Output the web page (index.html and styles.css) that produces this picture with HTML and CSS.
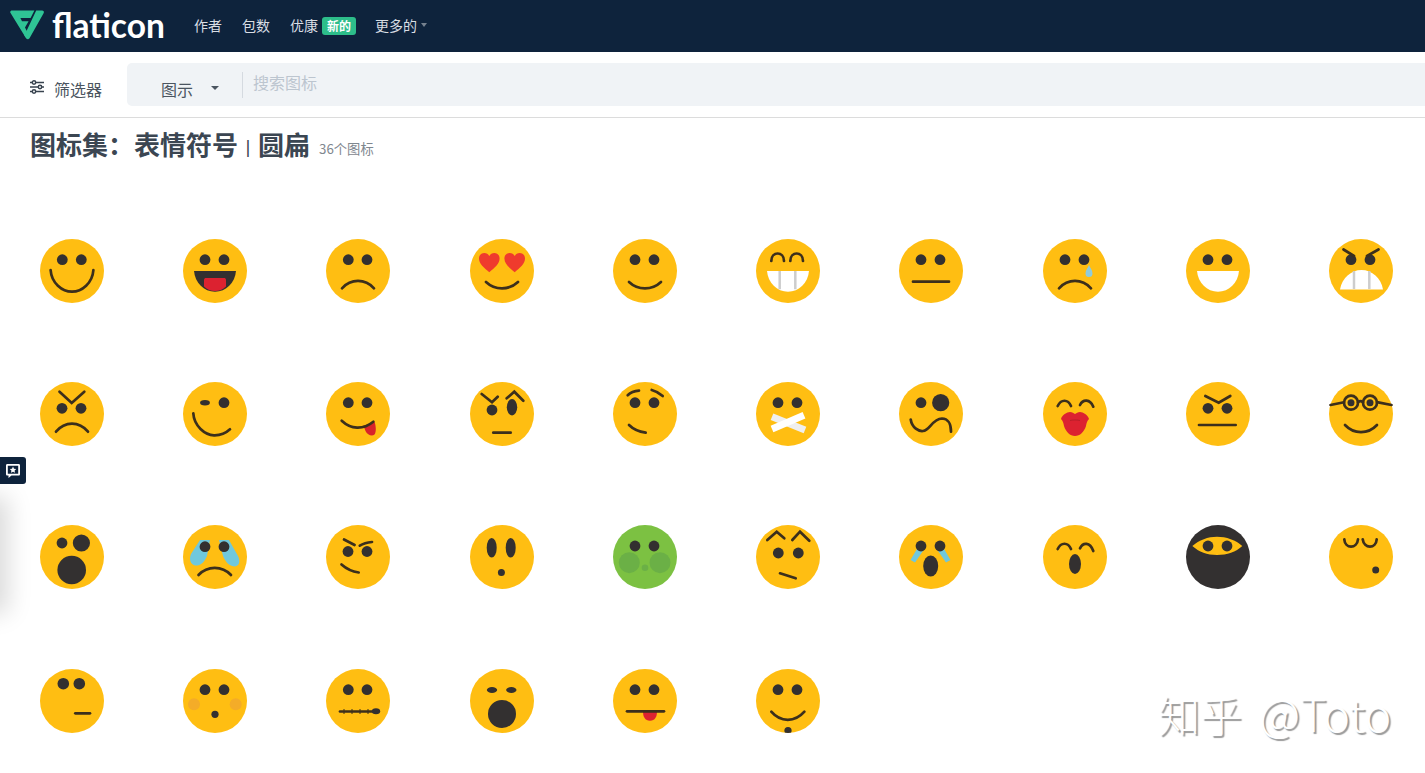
FILE: index.html
```html
<!DOCTYPE html>
<html lang="zh">
<head>
<meta charset="utf-8">
<title>flaticon</title>
<link rel="stylesheet" href="styles.css">
</head>
<body>
<header class="topbar">
  <a class="brand">
    <svg class="brand-mark" viewBox="0 0 34 30"><path d="M.4 2.8C-.2 1.4.8.4 2 .4H24.4L20.6 8H10.4L12 11.2H18.6L15 17.6 17.6 22.4 15.6 27.4Z"/><path d="M26.2.4H32.2C33.6.4 34.4 1.8 33.6 3.2L19.8 27.8C18.7 29.8 16.6 29.8 15.6 27.6L14.4 25.4Z"/></svg>
    <span class="brand-name">flaticon</span>
  </a>
  <nav class="nav">
    <a class="nav-item">作者</a>
    <a class="nav-item">包数</a>
    <a class="nav-item">优康<span class="badge">新的</span></a>
    <a class="nav-item nav-more">更多的<i class="nav-caret"></i></a>
  </nav>
</header>
<section class="toolbar">
  <div class="filter">
    <svg class="filter-icon" viewBox="0 0 14 14"><path d="M0 2.5H14M0 7H14M0 11.5H14"/><circle cx="4" cy="2.5" r="1.7"/><circle cx="10" cy="7" r="1.7"/><circle cx="4" cy="11.5" r="1.7"/></svg>
    <span>筛选器</span>
  </div>
  <div class="search">
    <div class="search-type">图示<i class="type-caret"></i></div>
    <div class="search-input">搜索图标</div>
  </div>
</section>
<h1 class="title">图标集：表情符号<span class="sep">|</span>圆扁<small class="count">36个图标</small></h1>
<main class="grid">
<!-- row 1 -->
<svg class="emo" viewBox="0 0 64 64"><circle class="face" cx="32" cy="32" r="32"/><circle class="eye" cx="22.3" cy="20.7" r="5.4"/><circle class="eye" cx="41.3" cy="20.7" r="5.4"/><path class="ln" d="M10.6 31C11.5 44 22 52.7 32 52.7S52.5 44 53.4 31"/></svg>
<svg class="emo" viewBox="0 0 64 64"><circle class="face" cx="32" cy="32" r="32"/><circle class="eye" cx="22" cy="20.7" r="5.4"/><circle class="eye" cx="41" cy="20.7" r="5.4"/><path class="eye" d="M11 32H53C52 44 43 52.7 32 52.7S12 44 11 32Z"/><path class="red" d="M21 41C21 39.5 22 39 23 39H41C42 39 43 39.5 43 41V47.5C40 50.8 36 52 32 52S24 50.8 21 47.5Z"/></svg>
<svg class="emo" viewBox="0 0 64 64"><circle class="face" cx="32" cy="32" r="32"/><circle class="eye" cx="22.3" cy="20.7" r="5.4"/><circle class="eye" cx="41" cy="20.7" r="5.4"/><path class="ln" d="M16 49.3C25 39.5 39 39.5 48 49.3"/></svg>
<svg class="emo" viewBox="0 0 64 64"><circle class="face" cx="32" cy="32" r="32"/><path class="heart" d="M19.3 33.3C14 28.5 9 25 9 19.5 9 16 11.5 14 14.3 14 16.5 14 18.3 15.2 19.3 17 20.3 15.2 22.1 14 24.3 14 27.1 14 29.6 16 29.6 19.5 29.6 25 24.6 28.5 19.3 33.3Z"/><path class="heart" d="M44.7 33.3C39.4 28.5 34.4 25 34.4 19.5 34.4 16 36.9 14 39.7 14 41.9 14 43.7 15.2 44.7 17 45.7 15.2 47.5 14 49.7 14 52.5 14 55 16 55 19.5 55 25 50 28.5 44.7 33.3Z"/><path class="ln" d="M16 43C25 51.5 39 51.5 48 43"/></svg>
<svg class="emo" viewBox="0 0 64 64"><circle class="face" cx="32" cy="32" r="32"/><circle class="eye" cx="22" cy="20.7" r="5.4"/><circle class="eye" cx="41" cy="20.7" r="5.4"/><path class="ln" d="M16 43C25 51.5 39 51.5 48 43"/></svg>
<svg class="emo" viewBox="0 0 64 64"><circle class="face" cx="32" cy="32" r="32"/><path class="ln" d="M15.3 22C15.3 12 28 12 28 22M34.3 22C34.3 12 47 12 47 22"/><path class="white" d="M11 32H53C52 44 43 52.7 32 52.7S12 44 11 32Z"/><path class="gap" d="M23.7 32V50.3M39.3 32V50.3"/></svg>
<svg class="emo" viewBox="0 0 64 64"><circle class="face" cx="32" cy="32" r="32"/><circle class="eye" cx="22" cy="20.7" r="5.4"/><circle class="eye" cx="41" cy="20.7" r="5.4"/><path class="ln" d="M14 42.7H50"/></svg>
<svg class="emo" viewBox="0 0 64 64"><circle class="face" cx="32" cy="32" r="32"/><circle class="eye" cx="22" cy="20.7" r="5.4"/><circle class="eye" cx="41" cy="20.7" r="5.4"/><path class="tear" d="M46 26C47 29 49.5 31 49.5 34.5A3.5 3.5 0 0 1 42.5 34.5C42.5 31 45 29 46 26Z"/><path class="ln" d="M16 49.3C25 39.5 39 39.5 48 49.3"/></svg>
<svg class="emo" viewBox="0 0 64 64"><circle class="face" cx="32" cy="32" r="32"/><circle class="eye" cx="22" cy="20.7" r="5.4"/><circle class="eye" cx="41" cy="20.7" r="5.4"/><path class="white" d="M11 32H53C52 44 43 52.7 32 52.7S12 44 11 32Z"/></svg>
<svg class="emo" viewBox="0 0 64 64"><circle class="face" cx="32" cy="32" r="32"/><circle class="eye" cx="22" cy="20.7" r="5.4"/><circle class="eye" cx="41" cy="20.7" r="5.4"/><path class="ln" d="M14.5 10.5L25 17M49.5 10.5L38 17"/><path class="white" d="M11 50.5C13 39 22 31 32.5 31S52 39 54 50.5Z"/><path class="gap" d="M25 32V50M40.3 32V50"/></svg>
<!-- row 2 -->
<svg class="emo" viewBox="0 0 64 64"><circle class="face" cx="32" cy="32" r="32"/><circle class="eye" cx="22" cy="26.3" r="5.4"/><circle class="eye" cx="41" cy="26.3" r="5.4"/><path class="ln" d="M19.5 9.7L31.7 21 44.3 9.7"/><path class="ln" d="M16 49.7C25 39 39 39 48 49.7"/></svg>
<svg class="emo" viewBox="0 0 64 64"><circle class="face" cx="32" cy="32" r="32"/><ellipse class="eye" cx="22" cy="20.7" rx="4.9" ry="2.7"/><circle class="eye" cx="41" cy="20.7" r="5.4"/><path class="ln" d="M10.3 31.3C11 44 22 53 31 53.3 38 53.5 43 51 47 47.3"/></svg>
<svg class="emo" viewBox="0 0 64 64"><circle class="face" cx="32" cy="32" r="32"/><circle class="eye" cx="22.3" cy="20.7" r="5.4"/><circle class="eye" cx="41" cy="20.7" r="5.4"/><path class="tongue" d="M37.3 43.5C40 43 45 41.5 48.5 39.5 50 44 50.5 50 48.5 52.5 46 55 41.5 53 39.5 49Z"/><path class="ln" d="M15.7 38.7C25 47.5 37 48 47.3 39.7"/></svg>
<svg class="emo" viewBox="0 0 64 64"><circle class="face" cx="32" cy="32" r="32"/><circle class="eye" cx="22" cy="28" r="5.4"/><ellipse class="eye" cx="42" cy="25.3" rx="5.2" ry="8.2"/><path class="ln" d="M11.7 12L22 20.3 27.7 14.7M36.7 16.3L44.3 9.7 53.3 18.7"/><path class="ln" d="M23.3 50.7H40.7"/></svg>
<svg class="emo" viewBox="0 0 64 64"><circle class="face" cx="32" cy="32" r="32"/><circle class="eye" cx="22" cy="20.7" r="5.4"/><circle class="eye" cx="41" cy="20.7" r="5.4"/><path class="ln" d="M14.7 13.3C17.5 10.5 21.5 9 26 8.7M38.7 8C42.5 9 46.5 11 49.7 14M16 43C20 47 26 49.7 32.7 50.7"/></svg>
<svg class="emo" viewBox="0 0 64 64"><circle class="face" cx="32" cy="32" r="32"/><circle class="eye" cx="22" cy="20.7" r="5.4"/><circle class="eye" cx="41" cy="20.7" r="5.4"/><path class="tape2" d="M16 34.7L49 48"/><path class="tape" d="M16 47L48 33.3"/></svg>
<svg class="emo" viewBox="0 0 64 64"><circle class="face" cx="32" cy="32" r="32"/><circle class="eye" cx="22" cy="20.7" r="5.4"/><circle class="eye" cx="41.7" cy="20.7" r="8.6"/><path class="ln" d="M11.7 37.5C13 46 20 49.5 24 49 31 48.5 33 37 43 36.5 49 36.5 52 42 52 49.7"/></svg>
<svg class="emo" viewBox="0 0 64 64"><circle class="face" cx="32" cy="32" r="32"/><path class="ln" d="M14.7 24C18 17 25 17 28 24M37 23C40 17 47 17 50.3 24.7"/><path class="red" d="M18 37C19 33 24 30 27 30 29 30 31 31.5 32 32 33 31.5 35 30 37 30 40 30 45 33 46 37 44 39 43.5 41 43 44 41 50 37 54 32 54S23 50 21 44C20.5 41 20 39 18 37Z"/><path class="lip" d="M27 38.5C29 37.8 35 37.8 37 38.5"/></svg>
<svg class="emo" viewBox="0 0 64 64"><circle class="face" cx="32" cy="32" r="32"/><circle class="eye" cx="22" cy="26.3" r="5.4"/><circle class="eye" cx="41" cy="26.3" r="5.4"/><path class="ln" d="M19.3 14L32.7 20.7 44.3 14"/><path class="ln" d="M13 43H49.7"/></svg>
<svg class="emo" viewBox="0 0 64 64"><circle class="face" cx="32" cy="32" r="32"/><circle class="ring" cx="22" cy="20.7" r="7"/><circle class="ring" cx="41" cy="20.7" r="7"/><circle class="eye" cx="22" cy="20.7" r="3.5"/><circle class="eye" cx="41" cy="20.7" r="3.5"/><path class="ln" d="M1.5 23L15 20.2M29 20.2C30.5 19 32.5 19 34 20.2M48 20.2L62.5 23"/><path class="ln" d="M16 43C25 52.5 39 52.5 48 43"/></svg>
<!-- row 3 -->
<svg class="emo" viewBox="0 0 64 64"><circle class="face" cx="32" cy="32" r="32"/><circle class="eye" cx="22" cy="18" r="5.4"/><circle class="eye" cx="41.4" cy="18" r="8.6"/><circle class="eye" cx="31.7" cy="45" r="14.3"/></svg>
<svg class="emo" viewBox="0 0 64 64"><circle class="face" cx="32" cy="32" r="32"/><path class="tear2" d="M17 15L8 29C6 34 7 39 12 40.5 17 41 21 38 24 31L27 15ZM46 15L55 31C57.5 36 56.5 41 52 41.5 47 41.5 43 38 40 31L36 15Z"/><circle class="eye" cx="22" cy="21.7" r="5.4"/><circle class="eye" cx="41" cy="21.7" r="5.4"/><path class="ln" d="M15.5 50C24.5 40.5 39 40.5 48 50"/></svg>
<svg class="emo" viewBox="0 0 64 64"><circle class="face" cx="32" cy="32" r="32"/><circle class="eye" cx="22" cy="26.5" r="5.4"/><circle class="eye" cx="41" cy="26.5" r="5.4"/><path class="ln" d="M18 14.5L28.6 20M33.8 20.7C37 18.7 41 17.5 46 17M15.5 39.5C20 43.5 26 46.5 32.7 47.5"/></svg>
<svg class="emo" viewBox="0 0 64 64"><circle class="face" cx="32" cy="32" r="32"/><ellipse class="eye" cx="21.7" cy="22.7" rx="5" ry="9.8"/><ellipse class="eye" cx="40.7" cy="22.7" rx="5" ry="9.8"/><circle class="eye" cx="31.4" cy="47.5" r="3.5"/></svg>
<svg class="emo" viewBox="0 0 64 64"><circle class="green" cx="32" cy="32" r="32"/><circle class="cheek" cx="16.3" cy="37.7" r="10.5"/><circle class="cheek" cx="47" cy="37.7" r="10.5"/><circle class="cheek" cx="32" cy="42.7" r="3.3"/><circle class="eye" cx="22" cy="21" r="5.4"/><circle class="eye" cx="41" cy="21" r="5.4"/></svg>
<svg class="emo" viewBox="0 0 64 64"><circle class="face" cx="32" cy="32" r="32"/><circle class="eye" cx="22.3" cy="28" r="5.4"/><circle class="eye" cx="42.3" cy="28" r="5.4"/><path class="ln" d="M11.3 15L20.7 6.7 28.3 13.3M36.3 15L44 6.7 53.3 15.7M24 48.3L39.7 53.3"/></svg>
<svg class="emo" viewBox="0 0 64 64"><circle class="face" cx="32" cy="32" r="32"/><path class="tear2" d="M18.5 23L11.5 35 16 37.5 25 24.5ZM44.5 23L51.5 35 47 37.5 38 24.5Z"/><circle class="eye" cx="22" cy="21" r="5.4"/><circle class="eye" cx="41" cy="21" r="5.4"/><ellipse class="eye" cx="31.7" cy="41" rx="7.5" ry="10.5"/></svg>
<svg class="emo" viewBox="0 0 64 64"><circle class="face" cx="32" cy="32" r="32"/><path class="ln" d="M14.7 24C18 17 25 17 28 24M37 23.3C40 17 47 17 50.3 26"/><ellipse class="eye" cx="32" cy="39" rx="6" ry="10"/></svg>
<svg class="emo" viewBox="0 0 64 64"><circle class="eye" cx="32" cy="32" r="32"/><path class="face" d="M6.3 21C13 15 22 11.7 31 11.7S50 15 56.3 21C50 27 41 30 31 30S13 27 6.3 21Z"/><circle class="eye" cx="22" cy="21" r="5.4"/><circle class="eye" cx="41" cy="21" r="5.4"/></svg>
<svg class="emo" viewBox="0 0 64 64"><circle class="face" cx="32" cy="32" r="32"/><path class="ln" d="M15.3 14.3C16 24 28 24 29 14.3M33.7 14.3C35 24 47 24 47.700 14.3"/><circle class="eye" cx="46.7" cy="45" r="3.5"/></svg>
<!-- row 4 -->
<svg class="emo" viewBox="0 0 64 64"><circle class="face" cx="32" cy="32" r="32"/><circle class="eye" cx="23.3" cy="14.7" r="5.8"/><circle class="eye" cx="39.3" cy="14.7" r="5.8"/><path class="ln" d="M35.3 44.3H50"/></svg>
<svg class="emo" viewBox="0 0 64 64"><circle class="face" cx="32" cy="32" r="32"/><circle class="blush" cx="11" cy="35.3" r="6"/><circle class="blush" cx="52.7" cy="35.3" r="6"/><circle class="eye" cx="22" cy="20.7" r="5.4"/><circle class="eye" cx="41" cy="20.7" r="5.4"/><circle class="eye" cx="32" cy="45.3" r="3.6"/></svg>
<svg class="emo" viewBox="0 0 64 64"><circle class="face" cx="32" cy="32" r="32"/><circle class="eye" cx="22.3" cy="20.7" r="5.4"/><circle class="eye" cx="41" cy="20.7" r="5.4"/><path class="ln" d="M14 42.5H49"/><path class="zip" d="M18 40V45M26 40V45M34 40V45M42 40V45"/><ellipse class="eye" cx="50" cy="42.3" rx="4.2" ry="3"/></svg>
<svg class="emo" viewBox="0 0 64 64"><circle class="face" cx="32" cy="32" r="32"/><ellipse class="eye" cx="22" cy="21" rx="5.2" ry="2.9"/><ellipse class="eye" cx="41.3" cy="21" rx="5.2" ry="2.9"/><circle class="eye" cx="32" cy="45" r="14"/></svg>
<svg class="emo" viewBox="0 0 64 64"><circle class="face" cx="32" cy="32" r="32"/><circle class="eye" cx="22" cy="20.7" r="5.4"/><circle class="eye" cx="41" cy="20.7" r="5.4"/><path class="red" d="M30 42.3H44C44 48 42 51.7 37 51.7S30 48 30 42.3Z"/><path class="ln" d="M14 42.3H51"/></svg>
<svg class="emo" viewBox="0 0 64 64"><clipPath id="chin"><circle cx="32" cy="32" r="32"/></clipPath><circle class="face" cx="32" cy="32" r="32"/><circle class="eye" cx="22" cy="20.7" r="5.4"/><circle class="eye" cx="41" cy="20.7" r="5.4"/><path class="ln" d="M15.3 42.7C24.5 53.5 39 53.5 48.4 42.7"/><circle class="eye" cx="32" cy="61.5" r="3.6" clip-path="url(#chin)"/></svg>
</main>
<button class="feedback" type="button" aria-label="feedback">
  <svg class="feedback-icon" viewBox="0 0 16 16"><path d="M2.5 1H13.5C14.5 1 15 1.5 15 2.5V11C15 12 14.5 12.5 13.5 12.5H6.5L3.5 15V12.5H2.5C1.5 12.5 1 12 1 11V2.5C1 1.5 1.5 1 2.5 1ZM2.8 2.8V10.7H13.2V2.8Z"/><path d="M8 3.5L9 5.7 11.3 6 9.6 7.5 10 9.8 8 8.7 6 9.8 6.4 7.5 4.7 6 7 5.7Z"/></svg>
</button>
<div class="side-shadow"></div>
<div class="watermark">知乎<span class="watermark-name">@Toto</span></div>
</body>
</html>
```
FILE: styles.css
```css
html, body {
  margin: 0;
  height: 773px;
  overflow: hidden;
  background: #fff;
  font-family: "Noto Sans CJK SC", "Noto Sans", sans-serif;
}
.topbar {
  height: 52px;
  background: #0e233c;
  display: flex;
  align-items: center;
  color: #fff;
}
.brand {
  display: flex;
  align-items: center;
  margin-left: 10px;
  gap: 8px;
  width: 184px;
}
.brand-mark {
  width: 34px;
  height: 30px;
  margin-top: -2px;
  fill: #2fc495;
}
.brand-name {
  font-family: "Lato", sans-serif;
  font-weight: 700;
  font-size: 33.5px;
  line-height: 36px;
  margin-top: -2px;
}
.nav {
  display: flex;
  align-items: center;
  gap: 20px;
  font-size: 14px;
  color: #d9dee4;
  margin-top: -3px;
}
.nav-item {
  display: flex;
  align-items: center;
  line-height: 18px;
}
.nav-more {
  margin-left: -1px;
}
.badge {
  margin: 1px 0 -1px 4px;
  width: 34px;
  height: 18px;
  border-radius: 3px;
  background: #2dbd8a;
  color: #fff;
  font-size: 12px;
  font-weight: 700;
  line-height: 18px;
  text-align: center;
}
.nav-caret {
  margin-left: 4px;
  margin-top: 1px;
  border: 3px solid transparent;
  border-top: 4px solid #76828f;
  border-bottom: 0;
}
.toolbar {
  height: 54px;
  border-bottom: 1px solid #dcdcdc;
  display: flex;
  padding-top: 11px;
  color: #4b5560;
}
.filter {
  width: 127px;
  display: flex;
  align-items: center;
  gap: 10px;
  padding: 8px 0 0 30px;
  box-sizing: border-box;
  height: 43px;
  font-size: 16px;
}
.filter-icon {
  width: 14px;
  height: 14px;
  margin-top: -4px;
  fill: #fff;
  stroke: #38434f;
  stroke-width: 1.5;
}
.search {
  flex: 1;
  height: 43px;
  background: #f0f3f6;
  border-radius: 5px 0 0 5px;
  display: flex;
}
.search-type {
  width: 115px;
  margin-top: 15px;
  height: 22px;
  padding-left: 34px;
  box-sizing: border-box;
  font-size: 16px;
  line-height: 22px;
  display: flex;
  align-items: center;
  gap: 18px;
}
.type-caret {
  margin-top: -3px;
  border: 4px solid transparent;
  border-top: 4px solid #4b5560;
  border-bottom: 0;
}
.search-input {
  margin-top: 9px;
  height: 26px;
  border-left: 1px solid #d5dae0;
  padding-left: 10px;
  font-size: 16px;
  line-height: 20px;
  color: #bcc5cf;
}
.title {
  margin: 0;
  padding: 8px 0 0 30px;
  height: 38px;
  font-size: 26px;
  line-height: 36px;
  font-weight: 700;
  color: #3b4652;
  white-space: nowrap;
}
.sep {
  display: inline-block;
  width: 20px;
  text-align: center;
  font-size: 15px;
  font-weight: 700;
  vertical-align: 2px;
  line-height: 20px;
}
.count {
  position: relative;
  top: -1px;
  margin-left: 9px;
  font-size: 13.3px;
  font-weight: 400;
  color: #7f878f;
}
.grid {
  display: grid;
  grid-template-columns: repeat(10, 143.25px);
  grid-auto-rows: 143.25px;
  justify-items: center;
  align-items: center;
  margin: 35.3px 0 0 0.2px;
}
.emo {
  width: 64px;
  height: 64px;
  display: block;
}
.face { fill: #ffbe12; }
.green { fill: #7cc142; }
.cheek { fill: #6bb046; }
.blush { fill: #f4ac28; }
.eye { fill: #333030; }
.red { fill: #dc2230; }
.heart { fill: #ef3b2d; }
.tongue { fill: #d8232a; }
.white { fill: #fff; }
.tear { fill: #8fcbdc; }
.tear2 { fill: #70c8dc; }
.lip {
  fill: none;
  stroke: #b81f28;
  stroke-width: 1;
}
.ln {
  fill: none;
  stroke: #3c2f1c;
  stroke-width: 2.7;
  stroke-linecap: round;
  stroke-linejoin: miter;
}
.ring {
  fill: none;
  stroke: #3c2f1c;
  stroke-width: 2.7;
}
.zip {
  fill: none;
  stroke: #3c2f1c;
  stroke-width: 1;
}
.gap {
  fill: none;
  stroke: #cdcdcd;
  stroke-width: 2.5;
}
.tape {
  fill: none;
  stroke: #fff;
  stroke-width: 7;
}
.tape2 {
  fill: none;
  stroke: #efefef;
  stroke-width: 7;
}
.feedback {
  position: absolute;
  left: 0;
  top: 457px;
  width: 26px;
  height: 27px;
  padding: 0;
  border: 0;
  border-radius: 0 3px 3px 0;
  background: #0e233c;
  display: flex;
  align-items: center;
  justify-content: center;
}
.feedback-icon {
  width: 16px;
  height: 16px;
  fill: #fff;
  fill-rule: evenodd;
}
.side-shadow {
  position: absolute;
  left: -24px;
  top: 505px;
  width: 24px;
  height: 100px;
  box-shadow: 0 0 24px 8px rgba(0, 0, 0, 0.15);
}
.watermark {
  position: absolute;
  left: 1158px;
  top: 686px;
  font-size: 42px;
  line-height: 54px;
  font-family: "Noto Sans CJK SC", "Liberation Sans", sans-serif;
  font-weight: 300;
  color: #fff;
  white-space: nowrap;
  text-shadow: 2px 2px 1px #9a9a9a;
}
.watermark-name {
  margin-left: 17px;
  font-size: 45px;
}
```
